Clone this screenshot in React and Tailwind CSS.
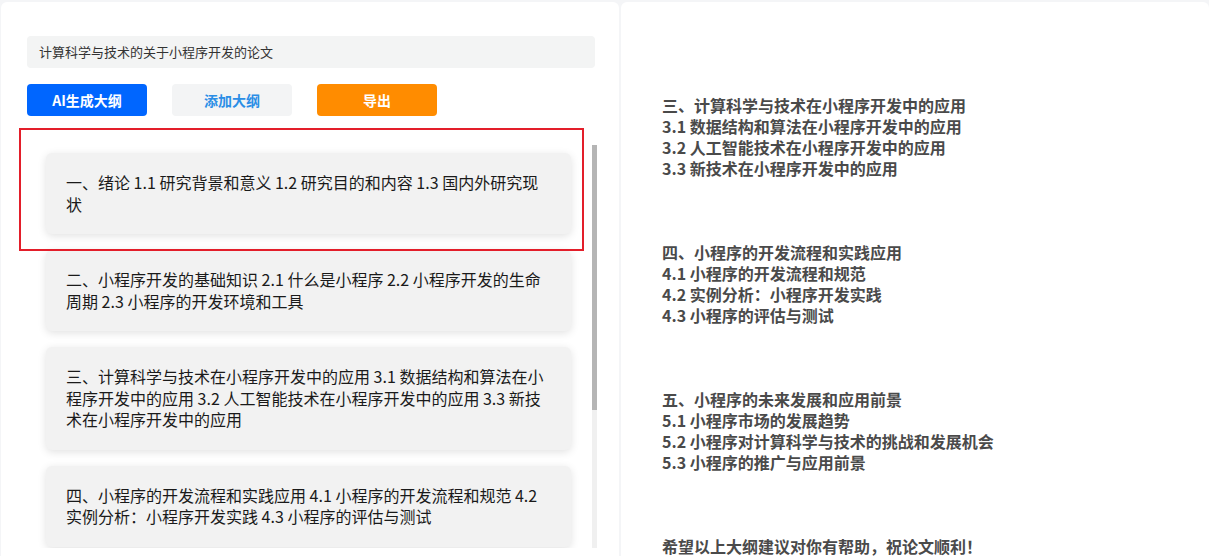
import React from 'react';

const outline = [
  '一、绪论 1.1 研究背景和意义 1.2 研究目的和内容 1.3 国内外研究现状',
  '二、小程序开发的基础知识 2.1 什么是小程序 2.2 小程序开发的生命周期 2.3 小程序的开发环境和工具',
  '三、计算科学与技术在小程序开发中的应用 3.1 数据结构和算法在小程序开发中的应用 3.2 人工智能技术在小程序开发中的应用 3.3 新技术在小程序开发中的应用',
  '四、小程序的开发流程和实践应用 4.1 小程序的开发流程和规范 4.2 实例分析：小程序开发实践 4.3 小程序的评估与测试',
  '五、小程序的未来发展和应用前景 5.1 小程序市场的发展趋势 5.2 小程序对计算科学与技术的挑战和发展机会 5.3 小程序的推广与应用前景',
];

const preview = [
  ['三、计算科学与技术在小程序开发中的应用', '3.1 数据结构和算法在小程序开发中的应用', '3.2 人工智能技术在小程序开发中的应用', '3.3 新技术在小程序开发中的应用'],
  ['四、小程序的开发流程和实践应用', '4.1 小程序的开发流程和规范', '4.2 实例分析：小程序开发实践', '4.3 小程序的评估与测试'],
  ['五、小程序的未来发展和应用前景', '5.1 小程序市场的发展趋势', '5.2 小程序对计算科学与技术的挑战和发展机会', '5.3 小程序的推广与应用前景'],
  ['希望以上大纲建议对你有帮助，祝论文顺利！'],
];

const font = "font-['Microsoft_YaHei','Noto_Sans_CJK_SC',sans-serif]";

const App = () => {
  return (
    <div className={`flex h-[556px] w-[1209px] overflow-hidden bg-[#f4f5f7] pt-[2px] pl-[1px] gap-[2px] ${font}`}>
      {/* Left: editor */}
      <div className="relative w-[618px] shrink-0 bg-white rounded-t-md pl-[26px] pt-[34px] flex flex-col">
        <div className="w-[568px] h-[32px] bg-[#f3f4f4] rounded flex items-center px-3 text-[13px] text-[#333]">
          计算科学与技术的关于小程序开发的论文
        </div>

        <div className="flex gap-[25px] mt-[16px]">
          <button className="w-[120px] h-[32px] rounded bg-[#0066ff] text-white text-[14px] font-bold">AI生成大纲</button>
          <button className="w-[120px] h-[32px] rounded bg-[#f3f4f5] text-[#2b8ee6] text-[14px] font-bold">添加大纲</button>
          <button className="w-[120px] h-[32px] rounded bg-[#ff8c00] text-white text-[14px] font-bold">导出</button>
        </div>

        <div className="flex mt-[29px] h-[403px]">
          <div className="w-[565px] overflow-hidden pl-[19px] pr-[21px] pt-[8px]">
            <div className="flex flex-col gap-4 pb-4">
              {outline.map((text, i) => (
                <div
                  key={i}
                  className="rounded-md bg-[#f2f2f2] px-5 py-[19px] text-[16px] leading-[21.5px] text-[#1a1a1a] shadow-[0_2px_8px_rgba(0,0,0,0.12)]"
                >
                  {text}
                </div>
              ))}
            </div>
          </div>
          {/* scrollbar */}
          <div className="w-[5px] bg-[#f0f0f0] flex flex-col">
            <div className="h-[265px] bg-[#b5b5b5]" />
          </div>
        </div>

        {/* selection outline */}
        <div className="absolute left-[18px] top-[126px] w-[565px] h-[123px] border-2 border-[#e31e2a] pointer-events-none" />
      </div>

      {/* Right: preview */}
      <div className="flex-1 bg-white rounded-t-md pl-[41px] pt-[93px]">
        <div className="flex flex-col gap-[63px] text-[16px] leading-[21px] font-bold text-[#4a4a4a]">
          {preview.map((group, i) => (
            <div key={i}>
              {group.map((line, j) => (
                <div key={j}>{line}</div>
              ))}
            </div>
          ))}
        </div>
      </div>
    </div>
  );
};

export default App;
